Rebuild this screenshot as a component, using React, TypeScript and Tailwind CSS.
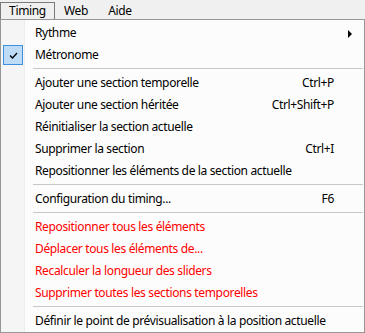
type Item =
    | { kind: "item"; label: string; shortcut?: string; red?: boolean; checked?: boolean; submenu?: boolean }
    | { kind: "sep" };

const items: Item[] = [
    { kind: "item", label: "Rythme", submenu: true },
    { kind: "item", label: "Métronome", checked: true },
    { kind: "sep" },
    { kind: "item", label: "Ajouter une section temporelle", shortcut: "Ctrl+P" },
    { kind: "item", label: "Ajouter une section héritée", shortcut: "Ctrl+Shift+P" },
    { kind: "item", label: "Réinitialiser la section actuelle" },
    { kind: "item", label: "Supprimer la section", shortcut: "Ctrl+I" },
    { kind: "item", label: "Repositionner les éléments de la section actuelle" },
    { kind: "sep" },
    { kind: "item", label: "Configuration du timing...", shortcut: "F6" },
    { kind: "sep" },
    { kind: "item", label: "Repositionner tous les éléments", red: true },
    { kind: "item", label: "Déplacer tous les éléments de...", red: true },
    { kind: "item", label: "Recalculer la longueur des sliders", red: true },
    { kind: "item", label: "Supprimer toutes les sections temporelles", red: true },
    { kind: "sep" },
    { kind: "item", label: "Définir le point de prévisualisation à la position actuelle" },
];

export default function App() {
    return (
        <div
            className="w-[365px] h-[333px] bg-[#f0f0f0] text-[12px] tracking-[-0.35px] text-black overflow-hidden"
            style={{ fontFamily: "'Segoe UI', 'Noto Sans', sans-serif" }}
        >
            {/* menu bar */}
            <div className="flex h-[19px] items-end">
                <div className="h-[17px] w-[55px] border border-b-0 border-[#7a7a7a] bg-[#f0f0f0] flex items-center justify-center leading-none">
                    Timing
                </div>
                <div className="w-[42px] text-center leading-[17px]">Web</div>
                <div className="w-[46px] text-center leading-[17px]">Aide</div>
            </div>

            {/* dropdown */}
            <div className="h-[314px] border border-[#979797] bg-[#fcfcfc] pt-[2px] relative">
                <div className="absolute left-0 top-0 bottom-0 w-[24px] bg-[#f5f5f5] border-r border-[#ededed]" />
                <div className="relative flex flex-col">
                    {items.map((it, i) =>
                        it.kind === "sep" ? (
                            <div key={i} className="h-[6px] pl-[32px] pr-[1px] pt-[2px]">
                                <div className="h-px bg-[#c8c8c8]" />
                            </div>
                        ) : (
                            <div key={i} className="h-[22px] flex items-center relative">
                                <div className="w-[34px] h-full flex items-center pl-[2px]">
                                    {it.checked && (
                                        <div className="w-[20px] h-[20px] border border-[#3d8fe0] bg-[#bfdcf7] flex items-center justify-center">
                                            <svg width="9" height="7" viewBox="0 0 9 7">
                                                <path d="M1 3.5 L3.5 6 L8 1" fill="none" stroke="#000" strokeWidth="1.3" />
                                            </svg>
                                        </div>
                                    )}
                                </div>
                                <span className={`flex-1 whitespace-nowrap ${it.red ? "text-[#ff0000]" : "text-black"}`}>
                                    {it.label}
                                </span>
                                {it.shortcut && <span className="pr-[30px] whitespace-nowrap">{it.shortcut}</span>}
                                {it.submenu && (
                                    <svg className="absolute right-[11px] top-[8px]" width="5" height="8" viewBox="0 0 5 8">
                                        <path d="M0 0 L4 4 L0 8 Z" fill="#000" />
                                    </svg>
                                )}
                            </div>
                        )
                    )}
                </div>
            </div>
        </div>
    );
}
